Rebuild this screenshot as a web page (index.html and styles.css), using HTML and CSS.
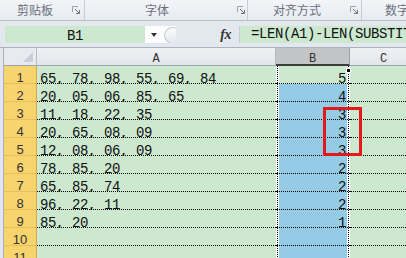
FILE: index.html
```html
<!DOCTYPE html>
<html lang="zh-CN">
<head>
<meta charset="utf-8">
<title>Excel</title>
<link rel="stylesheet" href="styles.css">
</head>
<body>
<div class="app">
  <div class="ribbon">
    <div class="grp g1"><span class="lbl">剪贴板</span><svg class="launch" width="8" height="8" viewBox="0 0 8 8"><path d="M.5 6V.5H6" stroke="#9aa1ab" fill="none"/><path d="M3 3L7 7M7.5 4V7.5H4" stroke="#6f7782" fill="none"/></svg></div>
    <div class="grp g2"><span class="lbl">字体</span><svg class="launch" width="8" height="8" viewBox="0 0 8 8"><path d="M.5 6V.5H6" stroke="#9aa1ab" fill="none"/><path d="M3 3L7 7M7.5 4V7.5H4" stroke="#6f7782" fill="none"/></svg></div>
    <div class="grp g3"><span class="lbl">对齐方式</span><svg class="launch" width="8" height="8" viewBox="0 0 8 8"><path d="M.5 6V.5H6" stroke="#9aa1ab" fill="none"/><path d="M3 3L7 7M7.5 4V7.5H4" stroke="#6f7782" fill="none"/></svg></div>
    <div class="grp g4"><span class="lbl">数字</span></div>
  </div>
  <div class="fbar">
    <div class="namebox">B1</div>
    <div class="nbdrop"><i class="caret"></i></div>
    <div class="knob"></div>
    <div class="fxarea"><span class="fx">fx</span></div>
    <div class="formula">=LEN(A1)-LEN(SUBSTITUTE(A1,",",""))</div>
  </div>
  <div class="sheet">
    <div class="ls"></div><div class="corner"></div><div class="ch">A</div><div class="ch chb">B</div><div class="ch">C</div>

    <div class="ls"></div><div class="rh">1</div><div class="ca">65, 78, 98, 55, 69, 84</div><div class="cb active">5<i class="handle"></i></div><div class="cc"></div>
    <div class="ls"></div><div class="rh">2</div><div class="ca">20, 05, 06, 85, 65</div><div class="cb">4</div><div class="cc"></div>
    <div class="ls"></div><div class="rh">3</div><div class="ca">11, 18, 22, 35</div><div class="cb">3</div><div class="cc"></div>
    <div class="ls"></div><div class="rh">4</div><div class="ca">20, 65, 08, 09</div><div class="cb">3</div><div class="cc"></div>
    <div class="ls"></div><div class="rh">5</div><div class="ca">12, 08, 06, 09</div><div class="cb">3</div><div class="cc"></div>
    <div class="ls"></div><div class="rh">6</div><div class="ca">78, 85, 20</div><div class="cb">2</div><div class="cc"></div>
    <div class="ls"></div><div class="rh">7</div><div class="ca">65, 85, 74</div><div class="cb">2</div><div class="cc"></div>
    <div class="ls"></div><div class="rh">8</div><div class="ca">96, 22, 11</div><div class="cb">2</div><div class="cc"></div>
    <div class="ls"></div><div class="rh">9</div><div class="ca">85, 20</div><div class="cb">1</div><div class="cc"></div>
    <div class="ls"></div><div class="rh">10</div><div class="ca"></div><div class="cb"></div><div class="cc"></div>
    <div class="ls"></div><div class="rh">11</div><div class="ca"></div><div class="cb"></div><div class="cc"></div>
  </div>
  <div class="mark"></div>
</div>
</body>
</html>
```

FILE: styles.css
```css
* { box-sizing: border-box; margin: 0; padding: 0; }
html, body { width: 406px; height: 258px; overflow: hidden; background: #fff; }
body { font-family: "Noto Sans CJK SC", "Noto Sans", sans-serif; }
.app { position: relative; width: 406px; height: 258px; overflow: hidden; }

/* ribbon */
.ribbon { display: flex; height: 21px; background: linear-gradient(#f3f5f8, #e7ebf0); border-bottom: 1px solid #b9c1cc; }
.grp { display: flex; align-items: center; flex: none; border-right: 1px solid #c6ccd4; font-size: 12px; line-height: 20px; color: #6b717c; white-space: nowrap; }
.launch { margin-left: auto; flex: none; }
.g1 { width: 85px; padding-left: 17px; }
.g1 .launch { margin-right: 4px; }
.g2 { width: 163px; padding-left: 60px; }
.g2 .launch { margin-right: 2px; }
.g3 { width: 114px; padding-left: 25px; }
.g3 .launch { margin-right: 3px; }
.g4 { flex: 1; min-width: 0; padding-left: 23px; border-right: 0; overflow: hidden; }

/* formula bar */
.fbar { display: flex; height: 26px; padding: 5px 0 4px 5px; background: #e3e8ee; }
.namebox { width: 140px; background: #cce8cf; font-family: "Liberation Mono", monospace; font-size: 14px; letter-spacing: -0.4px; line-height: 20px; text-align: center; color: #111; }
.nbdrop { width: 17px; background: #fff; display: flex; align-items: center; justify-content: center; }
.caret { width: 0; height: 0; border-left: 3px solid transparent; border-right: 3px solid transparent; border-top: 4px solid #333; margin-top: 1px; }
.knob { width: 14px; background: #fff; position: relative; overflow: hidden; }
.knob::before { content: ""; position: absolute; left: 2px; top: 1px; width: 16px; height: 15px; border-radius: 50%; border: 1px solid #c3c9d1; background: linear-gradient(#fafbfc, #e4e8ed); }
.fxarea { width: 64px; display: flex; align-items: center; justify-content: flex-end; padding-right: 8px; border-right: 1px solid #c5ccd5; }
.fx { font-family: "Liberation Serif", serif; font-style: italic; font-weight: bold; font-size: 14px; color: #333; letter-spacing: -0.5px; }
.formula { flex: 1; min-width: 0; background: #cce8cf; font-family: "Liberation Mono", monospace; font-size: 14px; letter-spacing: -0.4px; line-height: 17px; padding-left: 11px; white-space: nowrap; overflow: hidden; color: #111; }

/* sheet */
.sheet { display: grid; grid-template-columns: 4px 33px 239px 74px 68px; grid-template-rows: 18px; grid-auto-rows: 18px; border-top: 1px solid #aab2bd; }
.ls { background: #e3e7ec; border-right: 1px solid #a7b0bc; }
.corner { background: #e7eaef; border-right: 1px solid #b3bbc5; border-bottom: 1px solid #9ca6b2; position: relative; }
.corner::after { content: ""; position: absolute; right: 3px; bottom: 3px; width: 0; height: 0; border-left: 10px solid transparent; border-bottom: 10px solid #c9ced6; }
.ch { background: linear-gradient(#eff1f4, #e2e6eb); border-right: 1px solid #b3bbc5; border-bottom: 1px solid #9ca6b2; text-align: center; font-family: "Liberation Mono", monospace; font-size: 12px; line-height: 23px; color: #333; overflow: hidden; }
.chb { background: #c3c4c6; border-bottom: 2px solid #3c3c3c; border-right-color: #9ea2a8; }

.rh { background: #f8d46e; border-right: 1px solid #d8a946; border-bottom: 1px solid #e7bf5c; text-align: center; font-family: "Liberation Sans", sans-serif; font-size: 13px; line-height: 24px; color: #333; overflow: hidden; }
.ca, .cb, .cc { border-bottom: 1px dotted #000; font-family: "Liberation Mono", monospace; font-size: 14px; letter-spacing: -0.4px; line-height: 26px; color: #111; white-space: nowrap; }
.ca { background: #cce8cf; padding-left: 3px; }
.cc { background: #cce8cf; }
.cb {
  position: relative;
  text-align: right;
  padding-right: 4px;
  background:
    repeating-linear-gradient(#000 0 1px, transparent 1px 2px) 1px 0 / 1px 100% no-repeat,
    linear-gradient(#fff, #fff) 0 0 / 3px 100% no-repeat,
    repeating-linear-gradient(#000 0 1px, transparent 1px 2px) 72px 0 / 1px 100% no-repeat,
    linear-gradient(#fff, #fff) 71px 0 / 3px 100% no-repeat,
    #95cce5;
}
.cb.active {
  background:
    repeating-linear-gradient(#000 0 1px, transparent 1px 2px) 1px 0 / 1px 100% no-repeat,
    linear-gradient(#fff, #fff) 0 0 / 3px 100% no-repeat,
    repeating-linear-gradient(#000 0 1px, transparent 1px 2px) 72px 0 / 1px 100% no-repeat,
    linear-gradient(#fff, #fff) 71px 0 / 3px 100% no-repeat,
    #cce8cf;
}
.handle { position: absolute; right: -1px; top: 2px; width: 5px; height: 5px; background: #000; border: 1px solid #fff; }

.mark { position: absolute; left: 323px; top: 107px; width: 39px; height: 49px; border: 3px solid #e5191c; }
```
